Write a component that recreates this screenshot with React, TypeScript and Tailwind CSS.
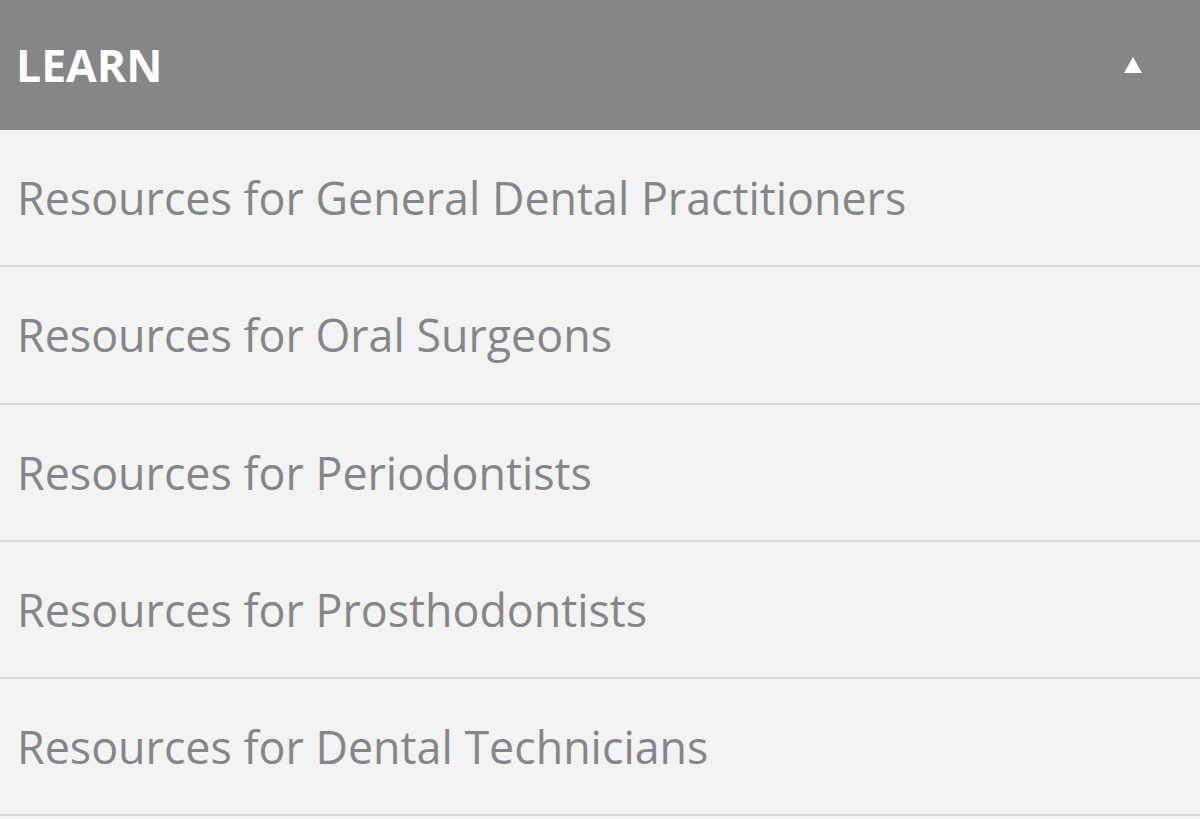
import React from 'react';

const items = [
  'Resources for General Dental Practitioners',
  'Resources for Oral Surgeons',
  'Resources for Periodontists',
  'Resources for Prosthodontists',
  'Resources for Dental Technicians',
];

export default function App() {
  return (
    <div className="min-h-[819px] w-[1200px] bg-[#f3f3f3]" style={{ fontFamily: '"Open Sans", sans-serif' }}>
      <div className="flex h-[130px] items-center justify-between bg-[#858688] pl-[16px] pr-[58px]">
        <span className="text-[44.5px] font-bold leading-none text-white">LEARN</span>
        <span className="h-0 w-0 border-x-[9px] border-b-[16px] border-x-transparent border-b-white" />
      </div>
      {items.map((item) => (
        <div
          key={item}
          className="flex h-[137.25px] items-center border-b-2 border-[#d9d9d9] pl-[17px] text-[44.8px] text-[#85868a]"
        >
          {item}
        </div>
      ))}
    </div>
  );
}
